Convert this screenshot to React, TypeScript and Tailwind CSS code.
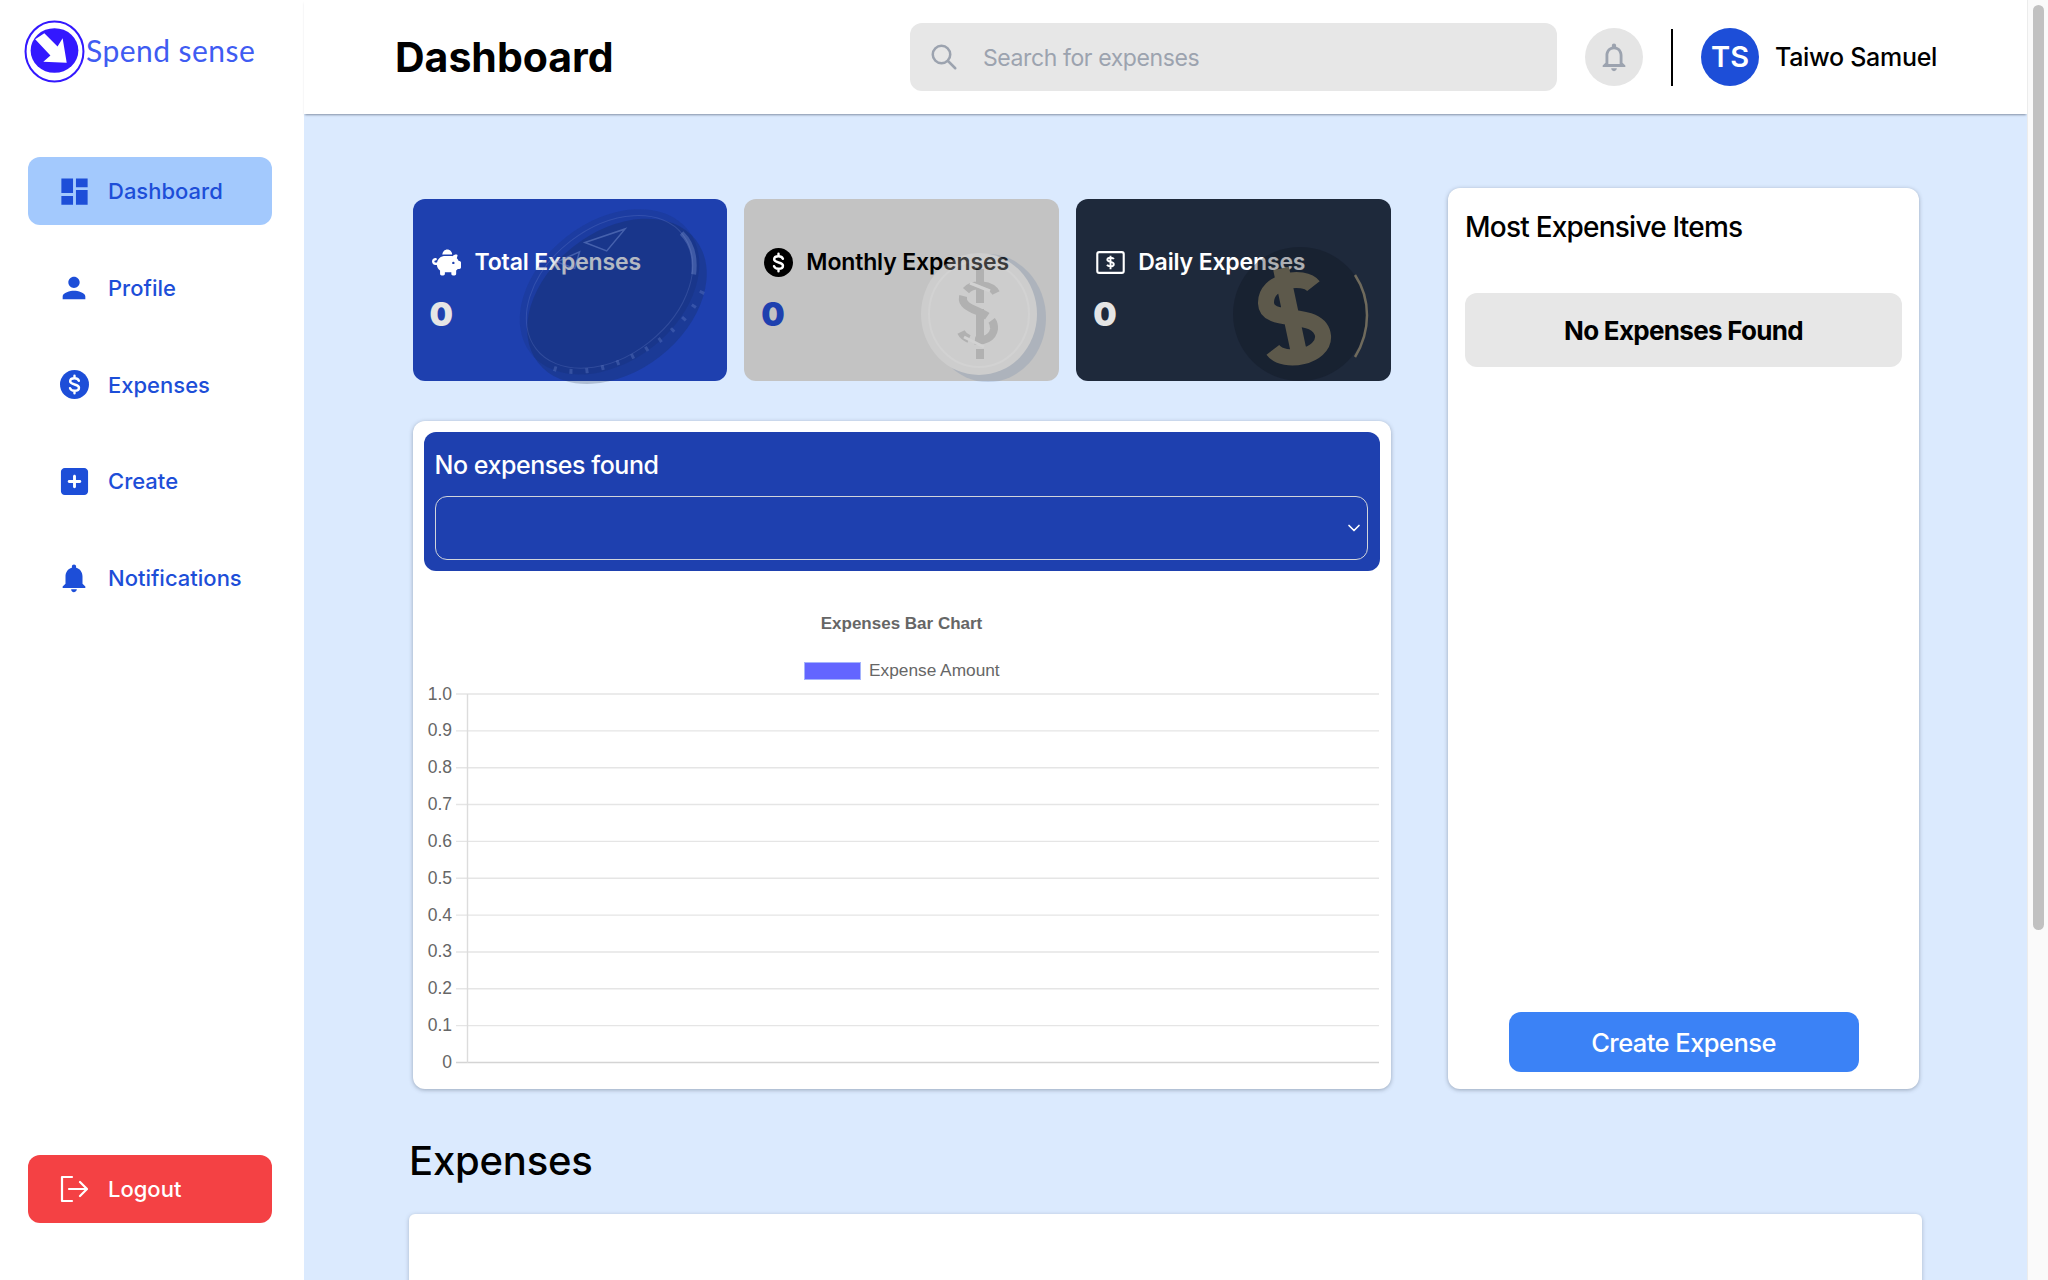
import { FaPiggyBank, FaSquarePlus } from "react-icons/fa6"
import { HiOutlineSearch } from "react-icons/hi"
import { MdDashboard, MdNotifications, MdNotificationsNone, MdPerson } from "react-icons/md"
import { LuChevronDown } from "react-icons/lu"

const DollarCircle = ({ className }: { className: string }) => (
  <svg viewBox="0 0 24 24" className={className}>
    <circle cx="12" cy="12" r="12" fill="currentColor" />
    <path
      d="M15.6 8.9c-.5-1.3-1.9-2.1-3.6-2.1-2 0-3.6 1-3.6 2.6 0 3.5 7.3 1.7 7.3 5.2 0 1.6-1.6 2.6-3.7 2.6-1.8 0-3.2-.8-3.7-2.2M12 4.8v2M12 17.2v2"
      fill="none"
      stroke="white"
      strokeWidth="2"
      strokeLinecap="round"
    />
  </svg>
)

const LogoutIcon = () => (
  <svg viewBox="0 0 28 28" className="w-[28px] h-[28px]" fill="none" stroke="white" strokeWidth="2.2" strokeLinecap="round" strokeLinejoin="round">
    <path d="M12 2H2v24h10" />
    <path d="M9 14h18M20 7l7 7-7 7" />
  </svg>
)

const CashIcon = () => (
  <svg viewBox="0 0 30 24" className="w-[29px] h-[23px]" fill="none" stroke="white">
    <rect x="1.2" y="1.2" width="27.6" height="21.6" rx="2" strokeWidth="2.2" />
    <path d="M18.5 8.5c-.4-.9-1.6-1.5-3.5-1.5-2 0-3.3.8-3.3 2.2 0 3 6.7 1.4 6.7 4.5 0 1.4-1.4 2.3-3.4 2.3-1.8 0-3.1-.6-3.6-1.6M15 5v14" strokeWidth="2" />
  </svg>
)

const BlueCoin = () => (
  <svg viewBox="0 0 190 176" className="absolute left-[103px] top-[6px] w-[192px] h-[176px] pointer-events-none overflow-visible">
    <g transform="rotate(-38 95 90)">
      <ellipse cx="95" cy="98" rx="100" ry="70" fill="#14243f" opacity="0.22" />
      <ellipse cx="95" cy="86" rx="100" ry="70" fill="#14243f" opacity="0.12" />
      <ellipse cx="95" cy="86" rx="93" ry="64" fill="none" stroke="#8aa2e0" strokeWidth="1" opacity="0.2" />
      <path d="M188 84c2 14-4 28-16 40" fill="none" stroke="#9db2ea" strokeWidth="5" opacity="0.28" />
      <path d="M4 112c24 38 122 62 176 24" fill="none" stroke="#7f97da" strokeWidth="5" strokeDasharray="3 13" opacity="0.28" />
      <path d="M72 30l24 6-14 10zM106 32l40 14-28 6z" fill="none" stroke="#8aa2e0" strokeWidth="1.5" opacity="0.4" />
    </g>
  </svg>
)

const SilverCoin = () => (
  <svg viewBox="0 0 126 130" className="absolute left-[176px] top-[54px] w-[126px] h-[130px] pointer-events-none opacity-25">
    <ellipse cx="68" cy="65" rx="58" ry="64" fill="#6f86a8" />
    <ellipse cx="59" cy="61" rx="58" ry="61" fill="#ececec" />
    <ellipse cx="59" cy="61" rx="50" ry="53" fill="none" stroke="#ffffff" strokeWidth="2" />
    <path
      d="M76 40c-5-10-30-12-33 4-3 15 33 13 31 32-2 15-27 15-33 3M60 16v90"
      fill="none"
      stroke="#7d7d7d"
      strokeWidth="8"
      strokeDasharray="34 6"
    />
    <path d="M50 30l20 8M44 84l20 10" fill="none" stroke="#ffffff" strokeWidth="3" />
  </svg>
)

const DarkCoin = () => (
  <svg viewBox="0 0 136 138" className="absolute left-[157px] top-[46px] w-[136px] h-[138px] pointer-events-none">
    <circle cx="67" cy="69" r="67" fill="#0e1420" opacity="0.34" />
    <path d="M122 30c16 24 16 56 0 82" fill="none" stroke="#6f6a5c" strokeWidth="2.5" />
    <g transform="rotate(-12 60 70)">
      <path
        d="M86 46c-7-14-46-16-50 7-4 22 52 16 49 44-3 20-44 20-52 3M58 22v96"
        fill="none"
        stroke="#5d594b"
        strokeWidth="16"
      />
    </g>
  </svg>
)

const navItems = [
  { label: "Dashboard", icon: <MdDashboard className="w-[35px] h-[35px] shrink-0" />, active: true },
  { label: "Profile", icon: <MdPerson className="w-[34px] h-[34px] shrink-0" /> },
  { label: "Expenses", icon: <DollarCircle className="w-[29px] h-[29px] shrink-0" /> },
  { label: "Create", icon: <FaSquarePlus className="w-[31px] h-[31px] shrink-0" /> },
  { label: "Notifications", icon: <MdNotifications className="w-[34px] h-[34px] shrink-0" /> },
]

const ticks = ["1.0", "0.9", "0.8", "0.7", "0.6", "0.5", "0.4", "0.3", "0.2", "0.1", "0"]

const Sidebar = () => (
  <aside className="w-[304px] shrink-0 bg-white flex flex-col">
    <div className="h-[157px] pl-[24px] pt-[20px]">
      <div className="flex items-start">
        <svg viewBox="0 0 60 62" className="w-[61px] h-[63px] shrink-0">
          <ellipse cx="30" cy="31" rx="28.5" ry="29.5" fill="none" stroke="#3318ff" strokeWidth="2" />
          <ellipse cx="30" cy="30" rx="23.5" ry="22" fill="#3318ff" />
          <path d="M11 19l9-6 13 13 5-8 4 24-23-1 7-6z" fill="white" />
        </svg>
        <span className="ml-[1px] mt-[10px] text-[30px] leading-[40px] font-[Lato,sans-serif] font-normal tracking-[0.45px] text-[#3f5cf2]">Spend sense</span>
      </div>
    </div>
    <nav className="flex flex-col gap-[28.75px] pl-[28px] pr-[32px]">
      {navItems.map(item => (
        <a
          key={item.label}
          className={`h-[68px] rounded-[12px] flex items-center text-[22px] font-medium text-[#1d4ed8] ${item.active ? "bg-[#a3c9fd]" : ""}`}
        >
          <span className="w-[32px] ml-[30px] flex justify-center">{item.icon}</span>
          <span className="ml-[18px] pt-[1px]">{item.label}</span>
        </a>
      ))}
    </nav>
    <button className="mt-auto mb-[57px] ml-[28px] mr-[32px] h-[68px] rounded-[12px] bg-[#f44144] flex items-center text-white text-[22px] font-medium">
      <span className="ml-[32px]">
        <LogoutIcon />
      </span>
      <span className="ml-[20px]">Logout</span>
    </button>
  </aside>
)

const Header = () => (
  <header className="relative z-10 h-[114px] shrink-0 bg-white shadow-[0_2px_2px_-1px_rgba(71,85,105,0.6)] flex items-center pl-[91px]">
    <h1 className="w-[515px] mt-[2px] text-[41px] font-bold text-black">Dashboard</h1>
    <div className="w-[647px] h-[68px] rounded-[12px] bg-[#e7e7e7] flex items-center pl-[19px]">
      <HiOutlineSearch className="w-[30px] h-[30px] text-[#9ca3af]" />
      <span className="ml-[24px] mt-[2px] text-[23px] tracking-[-0.4px] text-[#9ca3af]">Search for expenses</span>
    </div>
    <div className="ml-[28px] w-[58px] h-[58px] rounded-full bg-[#e5e5e5] flex items-center justify-center">
      <MdNotificationsNone className="w-[34px] h-[34px] text-[#9ca3af]" />
    </div>
    <div className="ml-[28px] w-[2px] h-[57px] bg-black" />
    <div className="ml-[28px] w-[58px] h-[58px] rounded-full bg-[#1d4ed8] flex items-center justify-center text-white text-[29px] font-semibold">TS</div>
    <span className="ml-[16px] mt-[2px] text-[25px] tracking-[-0.3px] font-medium text-black">Taiwo Samuel</span>
  </header>
)

const StatCard = ({ bg, title, titleColor, valueColor, icon, coin }: { bg: string; title: string; titleColor: string; valueColor: string; icon: React.ReactNode; coin: React.ReactNode }) => (
  <div className={`relative h-[182px] rounded-[12px] pl-[19px] pt-[47px] ${bg}`}>
    <div className={`flex items-center h-[32px] text-[23px] tracking-[-0.15px] font-semibold ${titleColor}`}>
      <span className="w-[30px] flex justify-center">{icon}</span>
      <span className="ml-[13px]">{title}</span>
    </div>
    <div className={`mt-[16px] -ml-[2px] text-[33px] leading-[40px] font-black ${valueColor}`}>0</div>
    {coin}
  </div>
)

const BarChart = () => (
  <svg viewBox="0 0 955 505" className="w-[955px] h-[505px] font-['Liberation_Sans',Arial,sans-serif]">
    <text x="477.5" y="58" textAnchor="middle" fontSize="17" fontWeight="700" fill="#666">Expenses Bar Chart</text>
    <rect x="380.5" y="91.5" width="56" height="17" fill="#6366ff" stroke="#a5b4fc" />
    <text x="445" y="105" fontSize="17.3" fill="#666">Expense Amount</text>
    {ticks.map((t, i) => {
      const y = 123 + i * 36.85
      return (
        <g key={t}>
          <line x1="32" x2="955" y1={y} y2={y} stroke={i === 10 ? "#d4d4d4" : "#e5e5e5"} strokeWidth="1.4" />
          <text x="28" y={y + 5.5} textAnchor="end" fontSize="17.5" fill="#666">{t}</text>
        </g>
      )
    })}
    <line x1="43.5" x2="43.5" y1="123" y2="492" stroke="#dcdcdc" strokeWidth="1.4" />
  </svg>
)

export default function App() {
  return (
    <div className="h-screen flex overflow-hidden font-[Inter,sans-serif] bg-[#dbeafe]">
      <Sidebar />
      <div className="flex-1 min-w-0 flex flex-col">
        <Header />
        <main className="flex-1 min-h-0 bg-[#dbeafe] pt-[74px] pl-[105px]">
          <div className="flex items-start">
            <div className="ml-[3.5px] w-[978.5px] pt-[11px]">
              <div className="grid grid-cols-3 gap-[17px]">
                <StatCard bg="bg-[#1e40af]" title="Total Expenses" titleColor="text-white" valueColor="text-[#e5e5e5]" icon={<FaPiggyBank className="w-[29px] h-[29px]" />} coin={<BlueCoin />} />
                <StatCard bg="bg-[#c3c3c3]" title="Monthly Expenses" titleColor="text-black" valueColor="text-[#1e40af]" icon={<DollarCircle className="w-[29px] h-[29px] text-black" />} coin={<SilverCoin />} />
                <StatCard bg="bg-[#1e293b]" title="Daily Expenses" titleColor="text-white" valueColor="text-[#e5e5e5]" icon={<CashIcon />} coin={<DarkCoin />} />
              </div>
              <section className="mt-[40px] h-[668px] rounded-[12px] bg-white shadow-[0_1px_4px_rgba(71,85,105,0.45)] pt-[11px] px-[11px]">
                <div className="h-[139px] rounded-[12px] bg-[#1e40af] pl-[11px] pr-[12px] pt-[13px]">
                  <h2 className="h-[40px] text-[25px] leading-[40px] tracking-[-0.45px] font-medium text-white">No expenses found</h2>
                  <div className="mt-[11px] h-[64px] rounded-[12px] border-[1.5px] border-[#d1d5db] flex items-center justify-end pr-[3px]">
                    <LuChevronDown className="w-[20px] h-[20px] text-white" />
                  </div>
                </div>
                <BarChart />
              </section>
            </div>
            <section className="ml-[57px] w-[471px] h-[901px] rounded-[12px] bg-white shadow-[0_1px_4px_rgba(71,85,105,0.45)] px-[17px] flex flex-col">
              <h2 className="mt-[20px] h-[38px] text-[28px] leading-[38px] tracking-[-0.78px] font-medium text-black">Most Expensive Items</h2>
              <div className="mt-[47px] h-[74px] rounded-[12px] bg-[#e7e7e7] flex items-center justify-center text-[26px] tracking-[-0.7px] font-bold text-black">No Expenses Found</div>
              <button className="mt-auto mb-[17px] mx-auto w-[350px] h-[60px] pt-[2px] rounded-[12px] bg-[#3b82f6] text-white text-[25.5px] tracking-[-0.55px] font-medium">Create Expense</button>
            </section>
          </div>
          <h2 className="mt-[47px] h-[50px] text-[40px] leading-[50px] tracking-[-0.2px] font-medium text-black">Expenses</h2>
          <div className="mt-[28px] w-[1513px] h-[200px] rounded-t-[6px] bg-white shadow-[0_1px_4px_rgba(71,85,105,0.35)]" />
        </main>
      </div>
      <div className="w-[21px] shrink-0 bg-[#fafafa] border-l border-[#ececec] pt-[5px] relative z-20">
        <div className="mx-auto w-[11px] h-[925px] rounded-full bg-[#c1c1c1]" />
      </div>
    </div>
  )
}
